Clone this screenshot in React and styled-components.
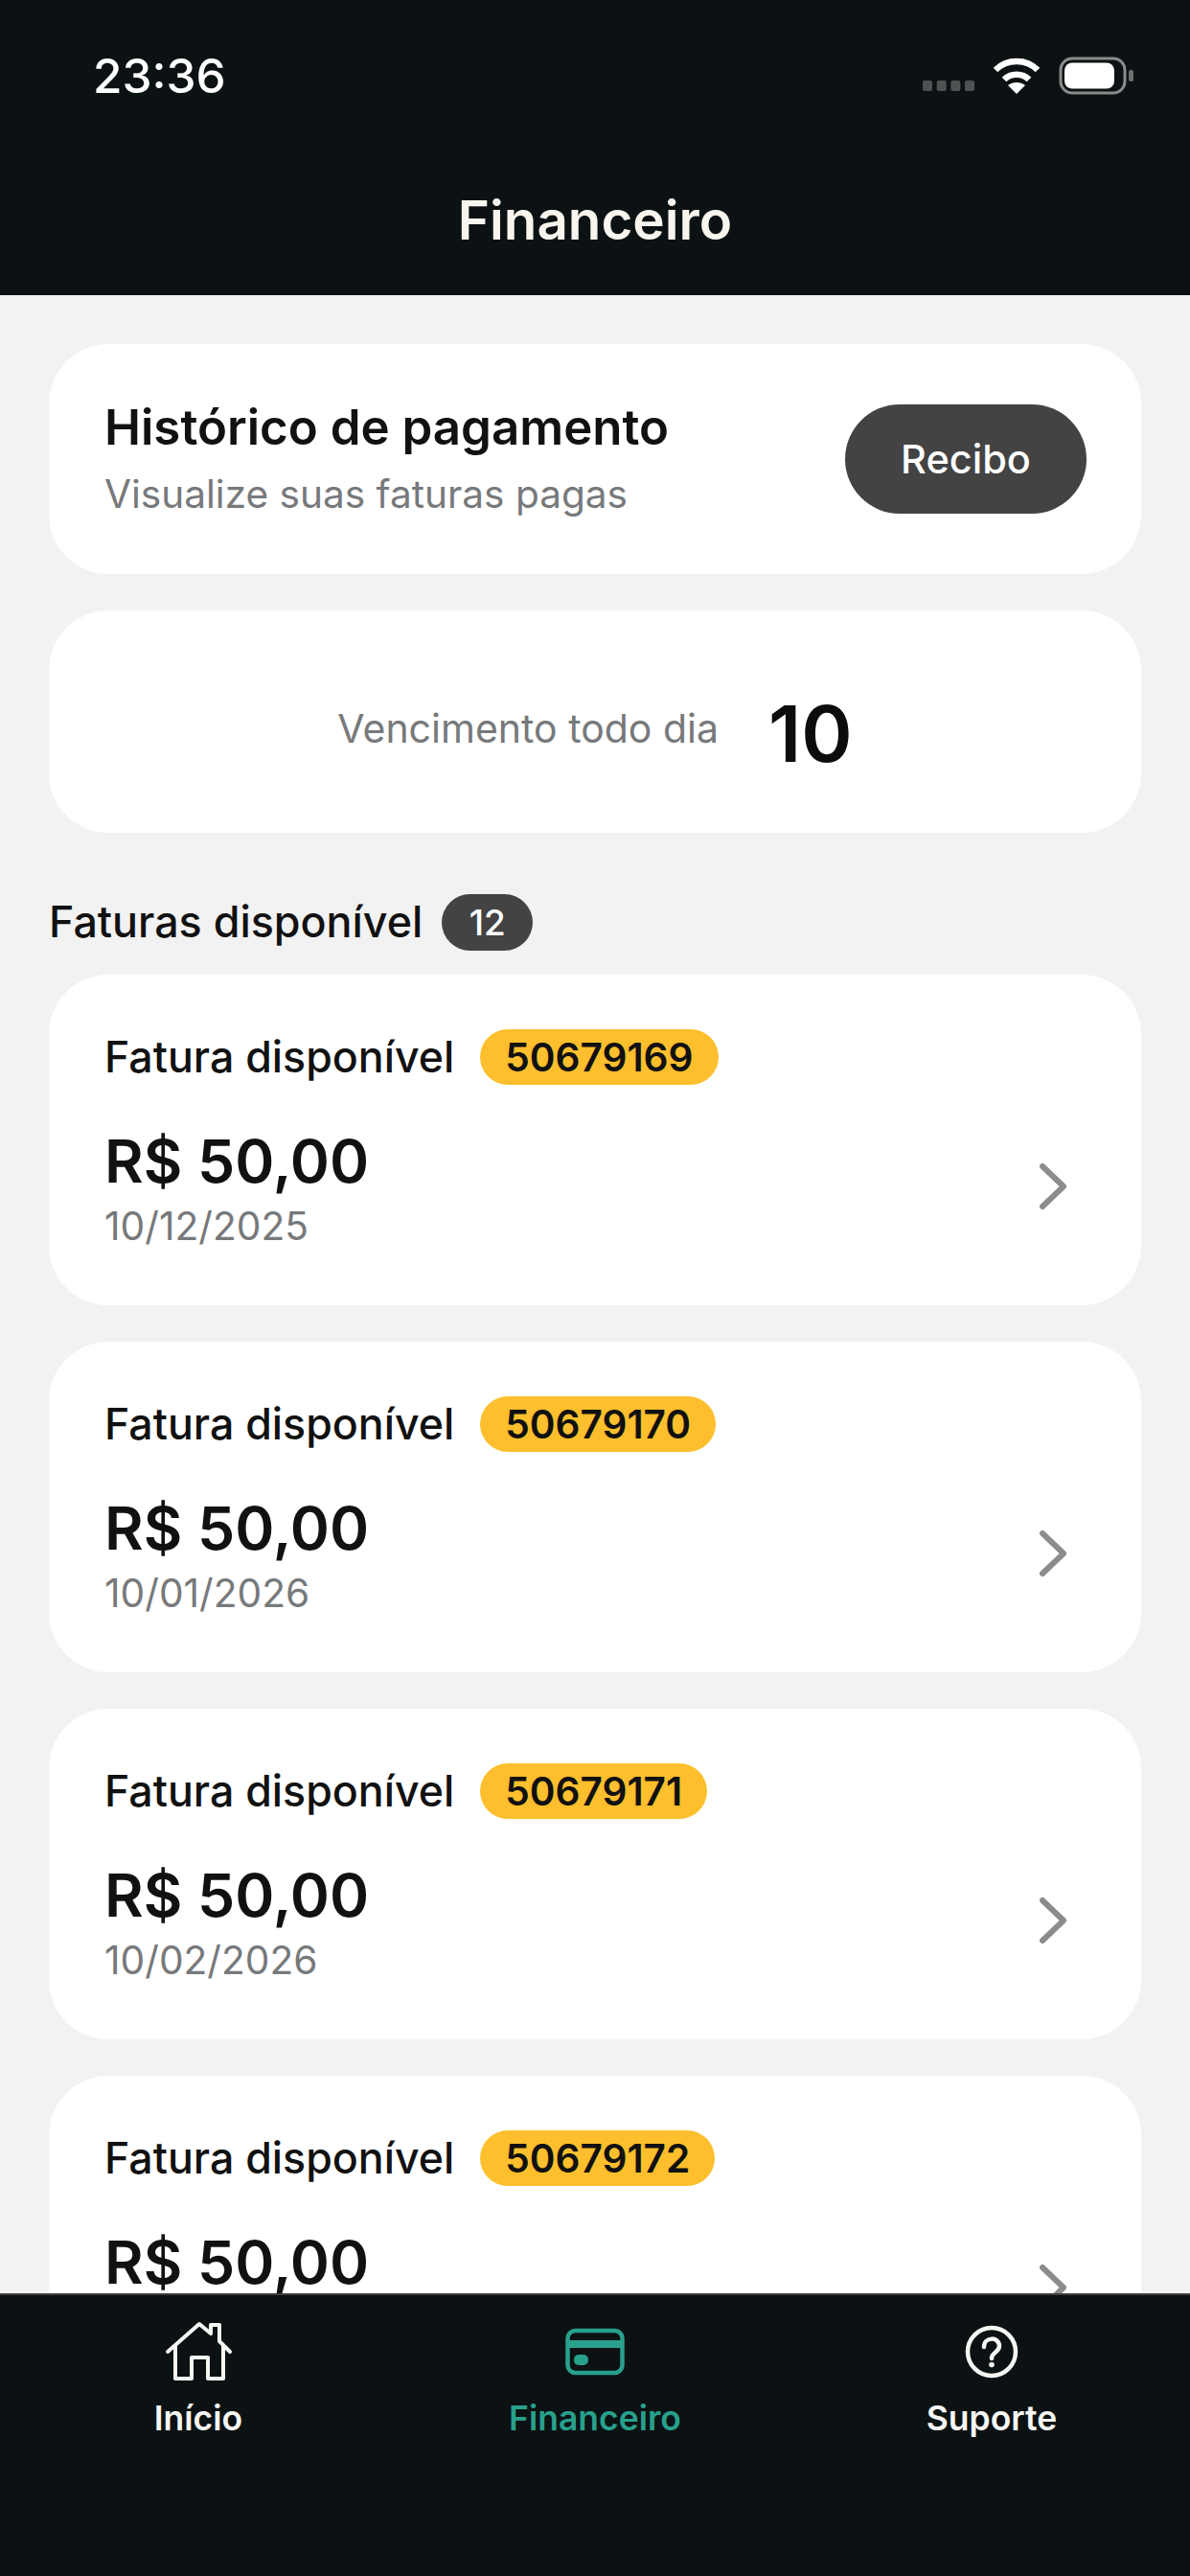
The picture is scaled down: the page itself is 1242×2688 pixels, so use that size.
import React from 'react';
import styled, { createGlobalStyle } from 'styled-components';

const GlobalStyle = createGlobalStyle`
  html, body {
    margin: 0;
    padding: 0;
    background: #f2f2f2;
  }
  * {
    box-sizing: border-box;
  }
`;

const Screen = styled.div`
  width: 1242px;
  height: 2688px;
  display: flex;
  flex-direction: column;
  overflow: hidden;
  background: #f2f2f2;
  font-family: 'Inter', 'Liberation Sans', sans-serif;
  color: #111;
`;

const Header = styled.header`
  flex: 0 0 308px;
  background: #0c1213;
  color: #fff;
  display: flex;
  flex-direction: column;
`;

const StatusBar = styled.div`
  flex: none;
  display: flex;
  align-items: center;
  justify-content: space-between;
  padding: 52px 57px 0 97px;
  height: 106px;
`;

const Clock = styled.span`
  font-size: 49.5px;
  font-weight: 500;
`;

const StatusIcons = styled.div`
  display: flex;
  align-items: center;
  gap: 19px;
`;

const SignalDots = styled.svg`
  margin-top: 20px;
`;

const Title = styled.h1`
  margin: 0;
  padding-top: 89px;
  text-align: center;
  font-size: 56.5px;
  font-weight: 600;
  line-height: 70px;
  color: #f7f5ee;
`;

const Content = styled.main`
  flex: 1;
  min-height: 0;
  overflow: hidden;
  padding: 51px 51px 0;
  display: flex;
  flex-direction: column;
`;

const Card = styled.section`
  flex: none;
  background: #fff;
  border-radius: 62px;
  width: 100%;
  height: ${({ $h }) => $h}px;
  margin-bottom: ${({ $mb }) => $mb}px;
`;

const HistoryCard = styled(Card)`
  display: flex;
  align-items: center;
  justify-content: space-between;
  padding: 0 57px 0 58px;
`;

const HistoryTitle = styled.div`
  font-size: 51px;
  font-weight: 600;
  line-height: 62px;
`;

const HistorySub = styled.div`
  font-size: 40.6px;
  color: #77797b;
  line-height: 54px;
  margin-top: 12px;
`;

const ReceiptButton = styled.button`
  width: 252px;
  height: 114px;
  border: none;
  border-radius: 57px;
  background: #434343;
  color: #fff;
  font: 500 41.5px 'Inter', sans-serif;
`;

const DueCard = styled(Card)`
  display: flex;
  align-items: center;
  justify-content: center;
  gap: 52px;
  padding-top: 26px;
`;

const DueLabel = styled.span`
  font-size: 41px;
  color: #77797b;
  margin-bottom: 12px;
`;

const DueDay = styled.span`
  font-size: 81px;
  font-weight: 600;
  color: #0c0c0c;
`;

const SectionRow = styled.div`
  flex: none;
  display: flex;
  align-items: center;
  gap: 20px;
  height: 60px;
  margin-bottom: 25px;
`;

const SectionTitle = styled.span`
  font-size: 44.8px;
  font-weight: 500;
`;

const CountBadge = styled.span`
  width: 95px;
  height: 59px;
  border-radius: 30px;
  background: #434343;
  color: #fff;
  font-size: 37px;
  font-weight: 500;
  display: flex;
  align-items: center;
  justify-content: center;
`;

const InvoiceCard = styled(Card)`
  display: flex;
  align-items: flex-start;
  justify-content: space-between;
  padding: 57px 77px 0 58px;
`;

const InvoiceHead = styled.div`
  display: flex;
  align-items: center;
  gap: 27px;
  height: 58px;
`;

const InvoiceLabel = styled.span`
  font-size: 44.7px;
  font-weight: 500;
`;

const InvoiceCode = styled.span`
  height: 58px;
  padding: 0 26px;
  border-radius: 29px;
  background: #fdbf2d;
  font-size: 40.6px;
  font-weight: 600;
  display: flex;
  align-items: center;
`;

const Amount = styled.div`
  font-size: 62.4px;
  font-weight: 600;
  line-height: 78px;
  margin-top: 41px;
`;

const DateText = styled.div`
  font-size: 40.7px;
  color: #77797b;
  line-height: 50px;
  margin-top: 4px;
`;

const Chevron = styled.svg`
  flex: none;
  margin-top: 139px;
`;

const BottomNav = styled.nav`
  flex: 0 0 295px;
  background: #0c1213;
  display: grid;
  grid-template-columns: 414px 414px 414px;
  padding-top: 23px;
  border-top: 2px solid #3a3d3e;
`;

const NavItem = styled.div`
  display: flex;
  flex-direction: column;
  align-items: center;
  color: ${({ $active }) => ($active ? '#28a08c' : '#f6f6f3')};
`;

const NavIcon = styled.svg`
  height: 72px;
  width: 72px;
`;

const NavLabel = styled.span`
  font-size: 35.5px;
  font-weight: 600;
  margin-top: 12px;
`;

const invoices = [
  { code: '50679169', date: '10/12/2025' },
  { code: '50679170', date: '10/01/2026' },
  { code: '50679171', date: '10/02/2026' },
  { code: '50679172', date: '10/03/2026' },
];

const App = () => (
  <Screen>
    <GlobalStyle />
    <Header>
      <StatusBar>
        <Clock>23:36</Clock>
        <StatusIcons>
          <SignalDots width="54" height="11" viewBox="0 0 54 11">
            <g fill="#4e5051">
              <rect x="0" y="0" width="10" height="11" rx="2" />
              <rect x="14.7" y="0" width="10" height="11" rx="2" />
              <rect x="29.3" y="0" width="10" height="11" rx="2" />
              <rect x="44" y="0" width="10" height="11" rx="2" />
            </g>
          </SignalDots>
          <svg width="50" height="38" viewBox="0 0 50 38" fill="none" stroke="#fff" strokeWidth="6.5">
            <path d="M3 13 C15 1 35 1 47 13" />
            <path d="M12 23 C19 16 31 16 38 23" />
            <path d="M25 38 L16 29 C21 25 29 25 34 29 Z" fill="#fff" stroke="none" />
          </svg>
          <svg width="80" height="40" viewBox="0 0 80 40" fill="none">
            <rect x="2" y="2" width="67" height="36" rx="12" stroke="#8a8c8c" strokeWidth="3" />
            <rect x="6" y="6.5" width="52" height="27" rx="8" fill="#fff" />
            <rect x="73" y="14" width="5" height="12" rx="2" fill="#6b6d6d" />
          </svg>
        </StatusIcons>
      </StatusBar>
      <Title>Financeiro</Title>
    </Header>
    <Content>
      <HistoryCard $h={240} $mb={38}>
        <div>
          <HistoryTitle>Histórico de pagamento</HistoryTitle>
          <HistorySub>Visualize suas faturas pagas</HistorySub>
        </div>
        <ReceiptButton>Recibo</ReceiptButton>
      </HistoryCard>
      <DueCard $h={232} $mb={63}>
        <DueLabel>Vencimento todo dia</DueLabel>
        <DueDay>10</DueDay>
      </DueCard>
      <SectionRow>
        <SectionTitle>Faturas disponível</SectionTitle>
        <CountBadge>12</CountBadge>
      </SectionRow>
      {invoices.map((invoice) => (
        <InvoiceCard key={invoice.code} $h={345} $mb={38}>
          <div>
            <InvoiceHead>
              <InvoiceLabel>Fatura disponível</InvoiceLabel>
              <InvoiceCode>{invoice.code}</InvoiceCode>
            </InvoiceHead>
            <Amount>R$ 50,00</Amount>
            <DateText>{invoice.date}</DateText>
          </div>
          <Chevron width="30" height="50" viewBox="0 0 30 50" fill="none" stroke="#8c8c8c" strokeWidth="6" strokeLinecap="round" strokeLinejoin="round">
            <path d="M4 4 L26 25 L4 46" />
          </Chevron>
        </InvoiceCard>
      ))}
    </Content>
    <BottomNav>
      <NavItem>
        <NavIcon viewBox="0 0 72 72" fill="none" stroke="currentColor" strokeWidth="4" strokeLinejoin="round" strokeLinecap="round">
          <path d="M4 36 L37 7 L49 17 V8 H58 V25 L69 36" />
          <path d="M12 30 V64 H29 V42 H46 V64 H62 V30" />
        </NavIcon>
        <NavLabel>Início</NavLabel>
      </NavItem>
      <NavItem $active>
        <NavIcon viewBox="0 0 72 72" fill="none" stroke="currentColor" strokeWidth="4.5">
          <rect x="7.5" y="14" width="57" height="44" rx="8" />
          <path d="M8 28 L64 28" strokeWidth="8" />
          <rect x="14" y="39" width="15" height="11" rx="5" fill="currentColor" stroke="none" />
        </NavIcon>
        <NavLabel>Financeiro</NavLabel>
      </NavItem>
      <NavItem>
        <NavIcon viewBox="0 0 72 72" fill="none" stroke="currentColor" strokeWidth="4.5" strokeLinecap="round">
          <circle cx="36" cy="36" r="25" />
          <path d="M28 31 C28 20 44 20 44 30 C44 37 36 36 36 43" />
          <circle cx="36" cy="49.5" r="2.8" fill="currentColor" stroke="none" />
        </NavIcon>
        <NavLabel>Suporte</NavLabel>
      </NavItem>
    </BottomNav>
  </Screen>
);

export default App;
